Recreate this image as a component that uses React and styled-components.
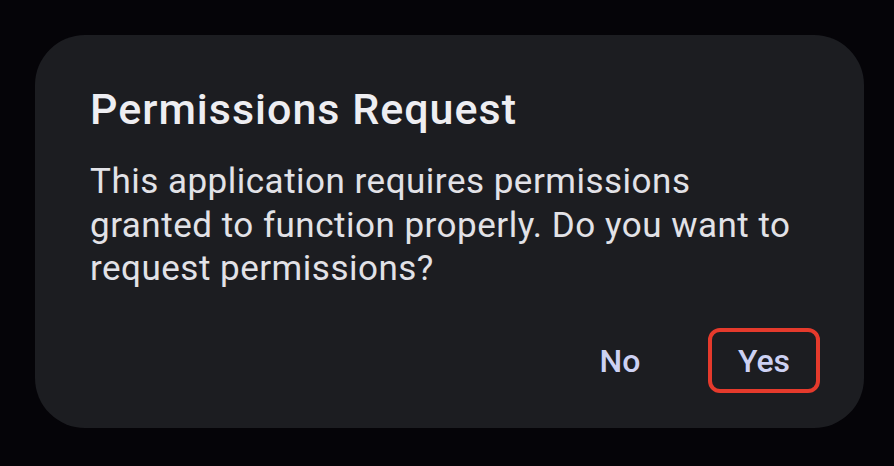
import React from "react";
import styled, { createGlobalStyle } from "styled-components";

const GlobalStyle = createGlobalStyle`
  html, body {
    margin: 0;
    padding: 0;
    background: #050408;
  }
  body {
    width: 894px;
    height: 466px;
    overflow: hidden;
    font-family: Roboto, "Noto Sans", sans-serif;
  }
`;

const Dialog = styled.div`
  margin: 35px 30px 0 35px;
  width: 829px;
  height: 393px;
  box-sizing: border-box;
  background: #1c1d21;
  border-radius: 50px;
  padding: 49px 44px 35px 55px;
  display: flex;
  flex-direction: column;
`;

const Title = styled.h1`
  margin: 0;
  font-size: 43px;
  font-weight: 500;
  line-height: 50px;
  letter-spacing: 1px;
  color: #eeeef2;
`;

const Message = styled.p`
  margin: 26px 0 0;
  font-size: 35px;
  font-weight: 400;
  line-height: 43.5px;
  letter-spacing: 0.5px;
  color: #e2e2e7;
  max-width: 712px;
`;

const Actions = styled.div`
  margin-top: auto;
  display: flex;
  justify-content: flex-end;
  gap: 32px;
`;

const ActionButton = styled.button`
  width: 112px;
  height: 65px;
  box-sizing: border-box;
  background: transparent;
  border: 4px solid ${p => (p.$highlighted ? "#e53a2c" : "transparent")};
  border-radius: 12px;
  font-family: inherit;
  font-size: 32px;
  font-weight: 500;
  color: #cdd1f3;
  padding: 0;
`;

export default function App() {
  return (
    <>
      <GlobalStyle />
      <Dialog>
        <Title>Permissions Request</Title>
        <Message>
          This application requires permissions granted to function properly. Do you want to request permissions?
        </Message>
        <Actions>
          <ActionButton>No</ActionButton>
          <ActionButton $highlighted>Yes</ActionButton>
        </Actions>
      </Dialog>
    </>
  );
}
